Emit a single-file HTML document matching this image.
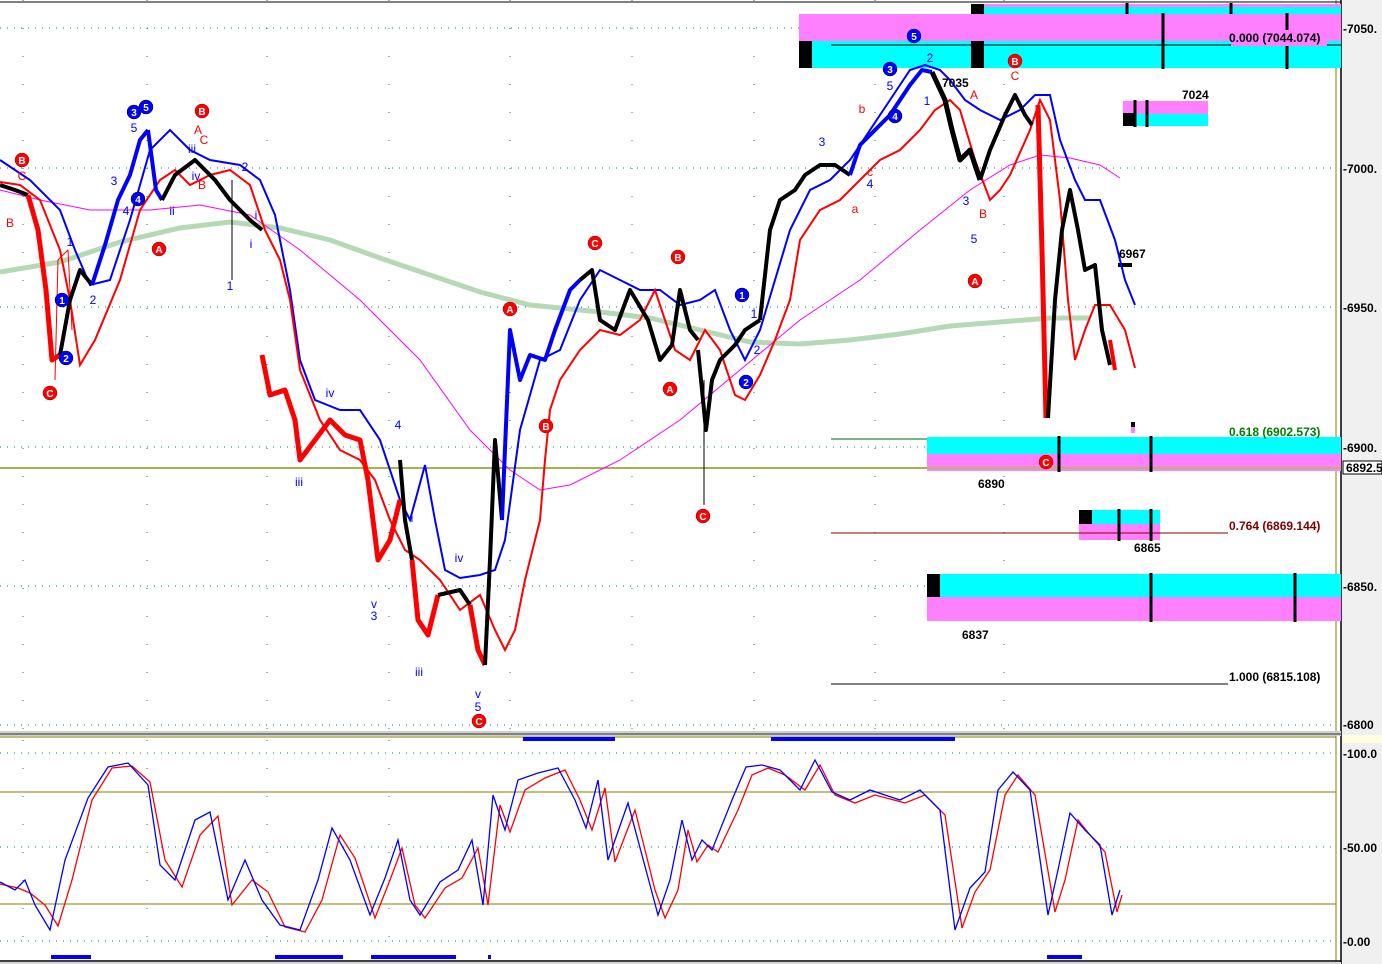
<!DOCTYPE html>
<html><head><meta charset="utf-8"><style>
html,body{margin:0;padding:0;background:#fff;}
svg{display:block;font-family:"Liberation Sans",sans-serif;}
</style></head><body>
<svg width="1382" height="964" viewBox="0 0 1382 964" xmlns="http://www.w3.org/2000/svg">
<rect width="1382" height="964" fill="#fff"/>
<!-- right axis -->
<rect x="1341" y="0" width="41" height="964" fill="#f0f0f0"/>
<line x1="1341" y1="0" x2="1341" y2="964" stroke="#000" stroke-width="1.5"/>
<line x1="1336" y1="0" x2="1336" y2="964" stroke="#808000"/>
<!-- top grid line -->
<line x1="0" y1="2" x2="1341" y2="2" stroke="#000" stroke-width="1"/>
<!-- dotted grid -->
<g stroke="#008080" stroke-dasharray="1 6" stroke-width="1">
<line x1="0" y1="28" x2="1336" y2="28"/><line x1="0" y1="168" x2="1336" y2="168"/>
<line x1="0" y1="307" x2="1336" y2="307"/><line x1="0" y1="447" x2="1336" y2="447"/>
<line x1="0" y1="586" x2="1336" y2="586"/><line x1="0" y1="725" x2="1336" y2="725"/>
<line x1="0" y1="753" x2="1336" y2="753"/><line x1="0" y1="847" x2="1336" y2="847"/><line x1="0" y1="941" x2="1336" y2="941"/>
</g>
<g stroke="#008080" stroke-dasharray="1 27" stroke-width="1">
<line x1="23" y1="0" x2="23" y2="730"/><line x1="147" y1="0" x2="147" y2="730"/><line x1="267" y1="0" x2="267" y2="730"/><line x1="389" y1="0" x2="389" y2="730"/><line x1="510" y1="0" x2="510" y2="730"/><line x1="632" y1="0" x2="632" y2="730"/><line x1="754" y1="0" x2="754" y2="730"/><line x1="875" y1="0" x2="875" y2="730"/><line x1="1004" y1="0" x2="1004" y2="730"/>
<line x1="23" y1="740" x2="23" y2="960"/><line x1="147" y1="740" x2="147" y2="960"/><line x1="267" y1="740" x2="267" y2="960"/><line x1="389" y1="740" x2="389" y2="960"/>
</g>
<!-- top boxes -->
<rect x="971" y="4" width="370" height="3" fill="#ff80ff"/>
<rect x="971" y="7" width="370" height="7" fill="#00ffff"/>
<rect x="971" y="4" width="13" height="10" fill="#000"/>
<rect x="799" y="14" width="542" height="27" fill="#ff80ff"/>
<rect x="799" y="41" width="542" height="27" fill="#00ffff"/>
<rect x="799" y="41" width="13" height="27" fill="#000"/>
<rect x="971" y="41" width="13" height="27" fill="#000"/>
<line x1="831" y1="45" x2="1341" y2="45" stroke="#000"/>
<g stroke="#000" stroke-width="3"><line x1="1163" y1="13" x2="1163" y2="69"/><line x1="1287" y1="13" x2="1287" y2="69"/><line x1="1127" y1="3" x2="1127" y2="14"/><line x1="1231" y1="3" x2="1231" y2="14"/></g>
<rect x="1231" y="30" width="96" height="16" fill="#ff80ff"/>
<text x="1229" y="42" font-size="12" font-weight="bold" fill="#000">0.000 (7044.074)</text>
<!-- 7024 box -->
<rect x="1123" y="101" width="85" height="13" fill="#ff80ff"/><rect x="1123" y="114" width="85" height="12" fill="#00ffff"/>
<rect x="1123" y="113" width="13" height="13" fill="#000"/>
<g stroke="#000" stroke-width="3"><line x1="1135" y1="100" x2="1135" y2="127"/><line x1="1147" y1="100" x2="1147" y2="127"/></g>
<text x="1182" y="99" font-size="12" font-weight="bold">7024</text>
<!-- 0.618 box -->
<line x1="831" y1="439" x2="1228" y2="439" stroke="#006400"/>
<rect x="927" y="437" width="414" height="17" fill="#00ffff"/><rect x="927" y="454" width="414" height="17" fill="#ff80ff"/>
<line x1="0" y1="468" x2="1341" y2="468" stroke="#9acd32" stroke-width="1.5"/>
<line x1="0" y1="468" x2="927" y2="468" stroke="#808000"/>
<g stroke="#000" stroke-width="3"><line x1="1059" y1="436" x2="1059" y2="472"/><line x1="1151" y1="436" x2="1151" y2="472"/></g>
<text x="1229" y="436" font-size="12" font-weight="bold" fill="#008000">0.618 (6902.573)</text>
<text x="978" y="488" font-size="12" font-weight="bold">6890</text>
<rect x="1131" y="422" width="4" height="5" fill="#000"/><rect x="1131" y="427" width="4" height="6" fill="#ff80ff"/>
<!-- 0.764 -->
<rect x="1079" y="510" width="81" height="14" fill="#00ffff"/><rect x="1079" y="524" width="81" height="16" fill="#ff80ff"/>
<rect x="1079" y="510" width="13" height="14" fill="#000"/>
<line x1="831" y1="533" x2="1228" y2="533" stroke="#800000"/>
<g stroke="#000" stroke-width="3"><line x1="1119" y1="509" x2="1119" y2="541"/><line x1="1151" y1="509" x2="1151" y2="541"/></g>
<text x="1229" y="530" font-size="12" font-weight="bold" fill="#800000">0.764 (6869.144)</text>
<text x="1134" y="552" font-size="12" font-weight="bold">6865</text>
<!-- 6837 box -->
<rect x="927" y="574" width="414" height="23" fill="#00ffff"/><rect x="927" y="597" width="414" height="24" fill="#ff80ff"/>
<rect x="927" y="574" width="13" height="23" fill="#000"/>
<g stroke="#000" stroke-width="3"><line x1="1151" y1="573" x2="1151" y2="622"/><line x1="1295" y1="573" x2="1295" y2="622"/></g>
<text x="962" y="639" font-size="12" font-weight="bold">6837</text>
<line x1="831" y1="684" x2="1228" y2="684" stroke="#000"/>
<text x="1229" y="681" font-size="12" font-weight="bold">1.000 (6815.108)</text>
<text x="1119" y="258" font-size="12" font-weight="bold">6967</text>
<rect x="1118" y="263" width="14" height="4" fill="#000"/>
<!-- axis labels -->
<g font-size="12" font-weight="bold">
<text x="1343" y="33">-7050.</text><text x="1343" y="173">-7000.</text><text x="1343" y="312">-6950.</text><text x="1343" y="452">-6900.</text><text x="1343" y="591">-6850.</text><text x="1343" y="729">-6800</text>
<text x="1343" y="758">-100.0</text><text x="1343" y="852">-50.00</text><text x="1343" y="946">-0.00</text>
</g>
<rect x="1343" y="461" width="39" height="13" fill="#fff" stroke="#000"/>
<text x="1346" y="472" font-size="12" font-weight="bold">6892.5</text>
<!-- MAs -->
<polyline fill="none" stroke="#b5d8b5" stroke-width="5" points="0,272 60,262 120,242 180,228 230,222 280,228 330,240 380,258 430,275 480,292 530,305 600,312 650,318 700,330 750,342 800,344 850,340 900,334 950,326 1000,322 1050,318 1090,318"/>
<polyline fill="none" stroke="#ff00ff" stroke-width="1" points="0,190 40,200 90,210 150,210 200,205 250,215 300,250 360,300 420,360 470,430 510,470 540,490 570,485 620,460 680,420 740,370 800,320 860,280 920,230 970,190 1010,165 1040,155 1070,158 1100,165 1120,178"/>
<!-- bands -->
<polyline fill="none" stroke="#0000ff" stroke-width="2" points="0,160 30,180 60,210 75,250 90,285 110,280 130,220 150,150 170,130 190,150 210,160 240,165 260,180 275,215 290,290 300,360 315,400 340,410 360,410 380,440 400,500 410,520 425,465 435,520 445,570 460,578 480,575 495,570 505,540 520,430 540,360 560,350 580,300 600,270 620,280 640,290 660,290 680,305 700,300 715,290 730,330 745,360 760,330 775,280 790,230 810,190 830,180 850,160 870,130 890,100 910,70 925,65 940,70 950,80 965,100 980,110 1000,120 1020,110 1035,95 1050,95 1060,140 1075,180 1085,200 1100,200 1115,240 1125,280 1135,305"/>
<polyline fill="none" stroke="#ff0000" stroke-width="2" points="0,182 20,185 40,200 60,250 70,300 80,365 95,340 120,280 140,210 160,180 175,170 190,185 210,175 230,170 250,185 265,230 280,260 290,300 300,370 320,420 340,450 360,460 375,480 390,520 405,550 420,560 440,580 460,610 480,595 495,630 505,650 515,630 525,580 540,520 545,460 550,410 560,380 580,350 600,330 620,335 640,320 655,290 665,320 675,350 690,360 705,330 720,350 735,395 745,400 760,375 775,340 790,300 800,240 820,210 840,200 860,180 880,160 900,150 920,130 935,110 950,100 960,110 975,160 990,200 1000,190 1010,175 1030,130 1040,100 1050,120 1060,200 1068,300 1075,360 1085,330 1095,305 1110,305 1125,330 1135,368"/>
<!-- price candles approx -->
<g fill="none" stroke-linejoin="round">
<polyline stroke="#000" stroke-width="4" points="0,185 15,190 28,195"/>
<polyline stroke="#ff0000" stroke-width="5" points="28,195 38,230 46,290 52,360 60,355"/>
<polyline stroke="#ff0000" stroke-width="1" points="55,380 58,260 68,250 72,330"/>
<polyline stroke="#000" stroke-width="4" points="60,355 70,300 80,270 92,285"/>
<polyline stroke="#0000ff" stroke-width="4" points="92,285 105,245 118,200 130,175 140,140 148,130"/>
<polyline stroke="#0000ff" stroke-width="4" points="148,130 156,190 162,200"/>
<polyline stroke="#000" stroke-width="4" points="162,200 175,175 195,160 215,180 230,200 250,220 262,230"/>
<polyline stroke="#000" stroke-width="1" points="232,180 232,280"/>
<polyline stroke="#ff0000" stroke-width="5" points="262,355 270,395 285,390 295,420 300,460 315,440 330,420 345,435 360,440 368,480 378,560 390,540 400,500"/>
<polyline stroke="#000" stroke-width="4" points="400,460 405,520 412,560"/>
<polyline stroke="#ff0000" stroke-width="5" points="412,560 418,620 428,635 438,595"/>
<polyline stroke="#000" stroke-width="4" points="438,595 460,590 470,605"/>
<polyline stroke="#ff0000" stroke-width="5" points="470,605 478,650 485,665"/>
<polyline stroke="#000" stroke-width="4" points="485,665 490,560 495,440 502,520"/>
<polyline stroke="#0000ff" stroke-width="4" points="502,520 510,330 520,380 530,355 545,360 555,330 570,290 580,280"/>
<polyline stroke="#000" stroke-width="4" points="580,280 592,270 600,320 615,330 630,290 648,320 660,360 672,345 680,290 690,330 698,340"/>
<polyline stroke="#000" stroke-width="1" points="704,380 704,505"/>
<polyline stroke="#000" stroke-width="4" points="698,350 706,430 712,380 720,360 735,345 745,330 760,320"/>
<polyline stroke="#000" stroke-width="4" points="760,320 770,230 780,200 795,190 805,175 820,165 835,165 850,175"/>
<polyline stroke="#0000ff" stroke-width="4" points="850,175 860,145 875,130 890,115 900,100 910,85 922,70 932,72"/>
<polyline stroke="#000" stroke-width="5" points="932,72 945,100 952,130 960,160 970,150 980,180"/>
<polyline stroke="#000" stroke-width="4" points="980,180 990,150 1005,115 1015,95 1025,115 1032,125"/>
<polyline stroke="#ff0000" stroke-width="5" points="1038,105 1042,250 1046,418"/>
<polyline stroke="#000" stroke-width="4" points="1048,418 1055,300 1062,230 1070,190 1078,230 1085,270 1095,265 1102,330 1110,365"/>
<polyline stroke="#ff0000" stroke-width="4" points="1110,340 1115,370"/>
</g>
<!-- wave labels -->
<g font-size="13" font-weight="bold" text-anchor="middle" fill="#fff">
<g fill="#f00" stroke="#800" stroke-width="0.5">
<circle cx="22" cy="160" r="7"/><circle cx="50" cy="393" r="7"/><circle cx="202" cy="111" r="7"/><circle cx="159" cy="249" r="7"/><circle cx="510" cy="309" r="7"/><circle cx="546" cy="426" r="7"/><circle cx="595" cy="243" r="7"/><circle cx="678" cy="257" r="7"/><circle cx="670" cy="389" r="7"/><circle cx="703" cy="516" r="7"/><circle cx="479" cy="721" r="7"/><circle cx="1015" cy="61" r="7"/><circle cx="975" cy="281" r="7"/><circle cx="1046" cy="462" r="7"/></g>
<g fill="#00f" stroke="#000" stroke-width="0.5">
<circle cx="62" cy="300" r="7"/><circle cx="66" cy="358" r="7"/><circle cx="134" cy="112" r="7"/><circle cx="146" cy="107" r="7"/><circle cx="138" cy="199" r="7"/><circle cx="742" cy="295" r="7"/><circle cx="746" cy="382" r="7"/><circle cx="914" cy="36" r="7"/><circle cx="890" cy="69" r="7"/><circle cx="895" cy="116" r="7"/></g>
<g font-size="10">
<text x="22" y="164">B</text><text x="50" y="397">C</text><text x="202" y="115">B</text><text x="159" y="253">A</text><text x="510" y="313">A</text><text x="546" y="430">B</text><text x="595" y="247">C</text><text x="678" y="261">B</text><text x="670" y="393">A</text><text x="703" y="520">C</text><text x="479" y="725">C</text><text x="1015" y="65">B</text><text x="975" y="285">A</text><text x="1046" y="466">C</text>
<text x="62" y="304">1</text><text x="66" y="362">2</text><text x="134" y="116">3</text><text x="146" y="111">5</text><text x="138" y="203">4</text><text x="742" y="299">1</text><text x="746" y="386">2</text><text x="914" y="40">5</text><text x="890" y="73">3</text><text x="895" y="120">4</text>
</g></g>
<g font-size="12" fill="#f00" text-anchor="middle">
<text x="10" y="227">B</text><text x="22" y="180">C</text><text x="198" y="134">A</text><text x="204" y="144">C</text><text x="202" y="189">B</text><text x="862" y="113">b</text><text x="870" y="176">c</text><text x="855" y="213">a</text><text x="974" y="99">A</text><text x="1015" y="80">C</text><text x="983" y="218">B</text>
</g>
<g font-size="12" fill="#00f" text-anchor="middle">
<text x="70" y="246">1</text><text x="93" y="304">2</text><text x="134" y="132">5</text><text x="114" y="185">3</text><text x="126" y="215">4</text><text x="192" y="153">iii</text><text x="196" y="180">iv</text><text x="172" y="215">ii</text><text x="245" y="171">2</text><text x="256" y="219">i</text><text x="251" y="248">i</text><text x="230" y="290">1</text>
<text x="330" y="397">iv</text><text x="299" y="486">iii</text><text x="398" y="429">4</text><text x="412" y="522">i</text><text x="374" y="608">v</text><text x="374" y="620">3</text><text x="419" y="676">iii</text><text x="459" y="562">iv</text><text x="478" y="698">v</text><text x="478" y="711">5</text>
<text x="822" y="146">3</text><text x="890" y="90">5</text><text x="930" y="62">2</text><text x="927" y="105">1</text><text x="870" y="188">4</text><text x="966" y="205">3</text><text x="974" y="243">5</text><text x="757" y="354">2</text><text x="754" y="318">1</text>
</g>
<text x="942" y="87" font-size="12" font-weight="bold">7035</text>
<!-- divider -->
<rect x="0" y="731" width="1341" height="5" fill="#d0d0d0"/>
<line x1="0" y1="734" x2="1341" y2="734" stroke="#808080" stroke-width="2"/>
<line x1="0" y1="737" x2="1336" y2="737" stroke="#808000"/>
<rect x="1343" y="735" width="39" height="8" fill="#ffffe0"/>
<rect x="523" y="737" width="92" height="4" fill="#0000ff"/><rect x="771" y="737" width="184" height="4" fill="#0000ff"/>
<!-- oscillator -->
<line x1="0" y1="792" x2="1336" y2="792" stroke="#808000"/>
<line x1="0" y1="904" x2="1336" y2="904" stroke="#808000"/>
<polyline fill="none" stroke="#f00" stroke-width="1.3" points="0,884 18,888 30,893 45,905 58,926 72,880 92,800 112,768 132,766 150,782 165,860 182,887 200,835 218,816 232,905 252,880 268,892 285,927 305,932 322,900 340,835 355,858 375,918 390,880 402,848 415,905 425,918 445,888 462,878 478,848 488,905 500,805 510,832 525,790 545,778 565,770 580,800 592,830 605,788 615,862 635,810 655,890 665,918 678,890 688,830 697,862 708,845 718,852 738,810 752,775 768,768 785,775 805,790 820,765 835,795 855,803 875,795 905,803 925,795 945,815 962,928 975,892 990,870 1005,795 1018,775 1035,795 1055,912 1065,880 1078,820 1090,835 1105,852 1117,912 1122,895"/>
<polyline fill="none" stroke="#00f" stroke-width="1.3" points="0,882 15,890 25,880 35,905 50,930 65,860 88,798 108,767 128,763 148,785 160,865 175,880 195,820 210,812 228,900 245,860 262,900 280,925 300,930 318,880 332,828 350,860 370,915 385,878 398,840 410,900 420,915 440,882 458,870 472,840 483,905 493,795 505,830 518,780 538,773 558,768 575,800 586,828 598,780 608,860 628,803 650,885 658,915 670,880 682,820 692,860 702,840 712,850 732,800 746,767 762,765 780,770 800,790 815,760 832,792 850,800 870,790 900,800 920,790 940,810 955,930 970,888 985,872 998,790 1013,772 1030,790 1048,915 1058,870 1070,813 1085,830 1100,845 1112,915 1120,890"/>
<!-- bottom bars -->
<rect x="51" y="955" width="40" height="4" fill="#0000ff"/><rect x="275" y="955" width="68" height="4" fill="#0000ff"/><rect x="371" y="955" width="85" height="4" fill="#0000ff"/><rect x="1047" y="955" width="35" height="4" fill="#0000ff"/><rect x="488" y="955" width="3" height="4" fill="#0000ff"/>
<line x1="0" y1="961" x2="1341" y2="961" stroke="#000" stroke-width="1.5"/>
<rect x="0" y="962" width="1341" height="2" fill="#d8d8d8"/>
</svg>
</body></html>
